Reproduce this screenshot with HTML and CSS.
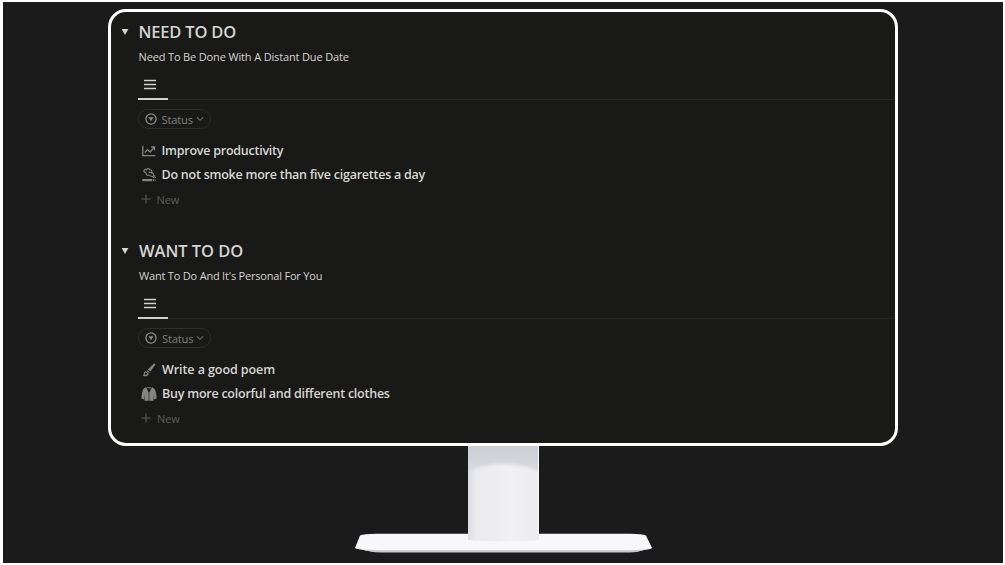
FILE: index.html
```
<!DOCTYPE html>
<html lang="en">
<head>
  <meta charset="UTF-8" />
  <meta name="viewport" content="width=device-width, initial-scale=1.0"/>
  <title>To Do Lists</title>
  <link rel="stylesheet" href="styles.css">
</head>
<body>

  <div class="backdrop">
    <div class="screen">

      <section class="list">
        <div class="list-header">
          <svg class="toggle" viewBox="0 0 8 8"><path d="M0.6 1h6.8L4 7z"/></svg>
          <h2 class="need-title">NEED TO DO</h2>
        </div>
        <p class="subtitle need-subtitle">Need To Be Done With A Distant Due Date</p>

        <div class="tabs">
          <div class="tab">
            <svg width="12" height="11" viewBox="0 0 12 11"><path d="M0 1.5h12M0 5.5h12M0 9.5h12"/></svg>
          </div>
        </div>

        <div class="status">
          <svg class="status-icon" viewBox="0 0 12 12"><circle cx="6" cy="6" r="5.1"/><path d="M3.4 4.2h5.2L6 8.3z"/></svg>
          <span>Status</span>
          <svg class="chevron" viewBox="0 0 8 6"><path d="M1 1.3l3 3 3-3"/></svg>
        </div>

        <ul class="items">
          <li>
            <svg class="item-icon line-icon" viewBox="0 0 14 14">
              <path d="M0.8 1.8v9.9h12.6"/>
              <path d="M2.8 8.6l2.6-3 2.7 2.4 4.1-4.6M9.2 3h3.3v3.2"/>
            </svg>
            <span class="item-productivity">Improve productivity</span>
          </li>
          <li>
            <svg class="item-icon" viewBox="0 0 14 14">
              <path class="smoke" d="M4.6 4.7C1.8 4.7 1.2 2.8 2.4 1.8c.7-.6 1.7-.4 2.1-.1C5 .2 7.4.2 8 1.8c2.1-.2 2.5 2.2.8 2.7-1 .3-1.7-.2-1.8-.9M4.3 4.8c-.8 2.2 1.2 3 2.7 2.3.6 1.4 2.6 1 3.7 1.5.8.4 1 .9 1 1.4M9 4.6c1.9-.1 2.9 1 2.5 2.6 1.2.3 1.8 1.2 1.8 2.7"/>
              <path d="M0.3 11h10v2.2h-10zM11.1 11h.8v2.2h-.8zM12.7 11h.8v2.2h-.8z"/>
            </svg>
            <span class="item-smoke">Do not smoke more than five cigarettes a day</span>
          </li>
        </ul>

        <div class="new-item">
          <svg viewBox="0 0 10 10"><path d="M5 0.4v9.2M0.4 5h9.2"/></svg>
          <span>New</span>
        </div>
      </section>

      <section class="list">
        <div class="list-header">
          <svg class="toggle" viewBox="0 0 8 8"><path d="M0.6 1h6.8L4 7z"/></svg>
          <h2 class="want-title">WANT TO DO</h2>
        </div>
        <p class="subtitle want-subtitle">Want To Do And It's Personal For You</p>

        <div class="tabs">
          <div class="tab">
            <svg width="12" height="11" viewBox="0 0 12 11"><path d="M0 1.5h12M0 5.5h12M0 9.5h12"/></svg>
          </div>
        </div>

        <div class="status">
          <svg class="status-icon" viewBox="0 0 12 12"><circle cx="6" cy="6" r="5.1"/><path d="M3.4 4.2h5.2L6 8.3z"/></svg>
          <span>Status</span>
          <svg class="chevron" viewBox="0 0 8 6"><path d="M1 1.3l3 3 3-3"/></svg>
        </div>

        <ul class="items">
          <li>
            <svg class="item-icon" viewBox="0 0 14 14">
              <path d="M12.9.6c.6.4.6.9.2 1.5L8.4 8.4 5.8 6.6 11.5 1C12 .5 12.5.3 12.9.6z"/>
              <path d="M5.1 7.2l2.6 2-.5.7-2.7-2z"/>
              <path fill-rule="evenodd" d="M4 8.3l2.8 2.1c.2 2.3-2.9 3.2-6.3 2.7 1.3-.8.9-1.6 1.3-2.9C2.2 9 3 8.3 4 8.3zM3.8 9.5c-1 .2-1.2 1.3-.7 2.1.9.3 2-.1 2.3-.9z"/>
            </svg>
            <span class="item-poem">Write a good poem</span>
          </li>
          <li>
            <svg class="item-icon coat" viewBox="0 0 16 14">
              <path d="M5.2.3L7.7 5.5v8.2H3.5V6.5L3 12.4.4 11.6C.5 7.6 1.2 4.5 2.3 2.3 2.9 1.2 4 .7 5.2.3zM10.8.3L8.3 5.5v8.2h4.2V6.5l.5 5.9 2.6-.8c-.1-4-.8-7.1-1.9-9.3C13.1 1.2 12 .7 10.8.3zM6 .2h4L9.7 1.2H6.3z"/>
            </svg>
            <span class="item-clothes">Buy more colorful and different clothes</span>
          </li>
        </ul>

        <div class="new-item">
          <svg viewBox="0 0 10 10"><path d="M5 0.4v9.2M0.4 5h9.2"/></svg>
          <span>New</span>
        </div>
      </section>

    </div>

    <!-- Monitor stand -->
    <svg class="stand" viewBox="0 0 300 108">
      <defs>
        <linearGradient id="neck" x1="0" y1="0" x2="1" y2="0">
          <stop offset="0" stop-color="#dddde3"/>
          <stop offset="0.12" stop-color="#ebebee"/>
          <stop offset="0.6" stop-color="#f1f1f3"/>
          <stop offset="1" stop-color="#ececf0"/>
        </linearGradient>
        <linearGradient id="shade" x1="0" y1="0" x2="0" y2="1">
          <stop offset="0" stop-color="#c9cad3"/>
          <stop offset="1" stop-color="#dcdce2"/>
        </linearGradient>
        <filter id="soft"><feGaussianBlur stdDeviation="1.5"/></filter>
        <clipPath id="neck-clip"><path d="M114 0h71v97h-71z"/></clipPath>
      </defs>
      <path fill="#f8f8fa" d="M6 89.5Q10 88 22 87.8H276Q288 88 292 89.5L298 102Q298 103 290 104Q284 106 276 106H26Q18 106 11 104.2Q1 103 1 102Z"/>
      <path fill="#c6c7d0" d="M8 103.6L26 104.3H276L292 103.6Q284 106.4 276 106.4H26Q16 106.4 8 103.6Z"/>
      <path fill="url(#neck)" d="M114 0h71v94q-35 3-71 0z"/>
      <g clip-path="url(#neck-clip)">
        <path fill="url(#shade)" filter="url(#soft)" d="M110-5h79v35q-8-11-38-12-31 0-41 12z"/>
      </g>
      <path fill="#fafafc" d="M184 0h1v88h-1z"/>
    </svg>
  </div>

</body>
</html>
```

FILE: styles.css
```
* {
  box-sizing: border-box;
}

body {
  margin: 0;
  height: 565px;
  padding: 2px 2.5px 2.5px 3px;
  background-color: #fff;
  font-family: "Open Sans", "Noto Sans", sans-serif;
  overflow: hidden;
}

.backdrop {
  height: 560.5px;
  padding-top: 7px;
  background-color: #1b1b1b;
  display: flex;
  flex-direction: column;
  align-items: center;
}

.screen {
  width: 790px;
  height: 437px;
  flex-shrink: 0;
  padding: 7px 0 0 26.8px;
  border: 3px solid #fff;
  border-radius: 18px;
  background-color: #191917;
}

.list {
  height: 219px;
}

.list + .list {
  padding-left: 0.5px;
}

.list-header {
  height: 26px;
  display: flex;
  align-items: center;
  gap: 10px;
  margin-left: -17px;
}

.toggle {
  width: 8px;
  height: 8px;
  fill: #d6d6d4;
}

h2 {
  margin: 0;
  font-size: 16.5px;
  font-weight: 600;
  line-height: 26px;
  color: #d4d4d2;
  white-space: nowrap;
}

.need-title {
  letter-spacing: -0.2px;
}

.want-title {
  letter-spacing: -0.05px;
}

.subtitle {
  margin: 0 0 0 1px;
  font-size: 11px;
  line-height: 24px;
  color: #d4d4d2;
  white-space: nowrap;
}

.need-subtitle {
  letter-spacing: -0.15px;
}

.want-subtitle {
  letter-spacing: -0.2px;
}

.tabs {
  height: 31px;
  display: flex;
  border-bottom: 1px solid #282826;
}

.tab {
  width: 30px;
  height: 31px;
  padding: 10px 0 0 6px;
  border-bottom: 2px solid #d0d0ce;
}

.tab svg {
  display: block;
  stroke: #d0d0ce;
  stroke-width: 1.4;
}

.status {
  width: 73px;
  height: 20px;
  margin-top: 9px;
  padding-left: 6px;
  border: 1px solid #2d2d2b;
  border-radius: 10px;
  display: flex;
  align-items: center;
  font-size: 11.2px;
  line-height: 17px;
  letter-spacing: -0.2px;
  color: #7f7f7d;
}

.status-icon {
  width: 12px;
  height: 12px;
  margin-right: 5px;
  fill: #8a8a88;
}

.status-icon circle {
  fill: none;
  stroke: #8a8a88;
  stroke-width: 1.3;
}

.chevron {
  width: 8px;
  height: 6px;
  margin-left: 3px;
  fill: none;
  stroke: #6c6c6a;
  stroke-width: 1.1;
}

.items {
  list-style: none;
  margin: 9.5px 0 0;
  padding: 0 0 0 4px;
}

.items li {
  height: 24px;
  display: flex;
  align-items: center;
  gap: 6px;
  font-size: 12.5px;
  font-weight: 650;
  color: #d6d6d4;
  white-space: nowrap;
}

.item-productivity {
  letter-spacing: -0.25px;
}

.item-smoke,
.item-clothes {
  letter-spacing: -0.24px;
}

.item-poem {
  letter-spacing: -0.08px;
}

.item-icon {
  width: 14px;
  height: 14px;
  flex-shrink: 0;
  fill: #858583;
}

.line-icon,
.smoke {
  fill: none;
  stroke: #858583;
  stroke-width: 1.3;
}

.smoke {
  stroke-width: 1.1;
}

.coat {
  width: 16px;
  margin: 0 -1px;
}

.new-item {
  height: 25px;
  padding-left: 3px;
  display: flex;
  align-items: center;
  gap: 6px;
  font-size: 11px;
  letter-spacing: -0.1px;
  color: #5c5c5a;
}

.new-item svg {
  width: 10px;
  height: 10px;
  stroke: #5c5c5a;
  stroke-width: 1.1;
}

.stand {
  width: 300px;
  height: 108px;
  flex-shrink: 0;
  margin-left: 2px;
  display: block;
}
```
